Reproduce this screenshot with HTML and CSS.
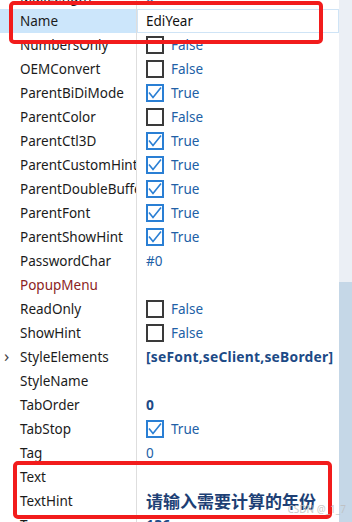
FILE: index.html
```html
<!DOCTYPE html>
<html lang="zh">
<head>
    <meta charset="UTF-8">
    <meta name="viewport" content="width=device-width, initial-scale=1.0">
    <title>Object Inspector</title>
    <link rel="stylesheet" href="styles.css">
</head>
<body>
    <div class="inspector">
        <div class="grid">
            <div class="row"><div class="name">MaxLength</div><div class="value">0</div></div>
            <div class="row selected"><div class="name">Name</div><div class="value"><div class="edit">EdiYear</div></div></div>
            <div class="row"><div class="name">NumbersOnly</div><div class="value"><span class="check"></span>False</div></div>
            <div class="row"><div class="name">OEMConvert</div><div class="value"><span class="check"></span>False</div></div>
            <div class="row"><div class="name">ParentBiDiMode</div><div class="value"><span class="check on"></span>True</div></div>
            <div class="row"><div class="name">ParentColor</div><div class="value"><span class="check"></span>False</div></div>
            <div class="row"><div class="name">ParentCtl3D</div><div class="value"><span class="check on"></span>True</div></div>
            <div class="row"><div class="name">ParentCustomHint</div><div class="value"><span class="check on"></span>True</div></div>
            <div class="row"><div class="name">ParentDoubleBuffered</div><div class="value"><span class="check on"></span>True</div></div>
            <div class="row"><div class="name">ParentFont</div><div class="value"><span class="check on"></span>True</div></div>
            <div class="row"><div class="name">ParentShowHint</div><div class="value"><span class="check on"></span>True</div></div>
            <div class="row"><div class="name">PasswordChar</div><div class="value">#0</div></div>
            <div class="row"><div class="name link">PopupMenu</div><div class="value"></div></div>
            <div class="row"><div class="name">ReadOnly</div><div class="value"><span class="check"></span>False</div></div>
            <div class="row"><div class="name">ShowHint</div><div class="value"><span class="check"></span>False</div></div>
            <div class="row"><div class="name"><span class="expand">&#x203A;</span>StyleElements</div><div class="value bold">[seFont,seClient,seBorder]</div></div>
            <div class="row"><div class="name">StyleName</div><div class="value"></div></div>
            <div class="row"><div class="name">TabOrder</div><div class="value bold">0</div></div>
            <div class="row"><div class="name">TabStop</div><div class="value"><span class="check on"></span>True</div></div>
            <div class="row"><div class="name">Tag</div><div class="value">0</div></div>
            <div class="row"><div class="name">Text</div><div class="value"></div></div>
            <div class="row"><div class="name">TextHint</div><div class="value bold cjk">请输入需要计算的年份</div></div>
            <div class="row"><div class="name">Top</div><div class="value bold">136</div></div>
        </div>
        <div class="scrollbar"><div class="thumb"></div></div>

        <div class="mark mark-top"></div>
        <div class="mark mark-bottom"></div>
        <div class="watermark">CSDN @_1_7</div>
    </div>
</body>
</html>
```

FILE: styles.css
```css
* {
    box-sizing: border-box;
}
body {
    margin: 0;
    background-color: #fff;
    font-family: "Noto Sans", "Open Sans", sans-serif;
    font-size: 13.5px;
    color: #1b1b1b;
}
.inspector {
    position: relative;
    width: 352px;
    height: 522px;
    overflow: hidden;
    display: flex;
}
.grid {
    flex: 1;
    margin-top: -15px;
}
.row {
    display: grid;
    grid-template-columns: 137px 1fr;
    height: 24px;
    line-height: 24px;
    white-space: nowrap;
}
.name {
    position: relative;
    padding-left: 20px;
    overflow: hidden;
    border-right: 1px solid #dedede;
}
.name.link {
    color: #8b2323;
}
.expand {
    position: absolute;
    left: 4px;
    top: -1px;
    font-size: 17px;
    color: #444;
}
.value {
    display: flex;
    align-items: center;
    padding-left: 9px;
    color: #2160a6;
    overflow: hidden;
}
.value.bold {
    font-weight: bold;
    font-size: 13.8px;
    letter-spacing: 0.25px;
    color: #1c4a86;
}
.value.cjk {
    font-family: "Noto Sans CJK SC", sans-serif;
    font-size: 17px;
    letter-spacing: 0;
    color: #1d3f75;
}
.selected .name {
    background-color: #cce6fb;
}
.selected .value {
    padding: 0;
}
.edit {
    width: 100%;
    height: 24px;
    padding-left: 8px;
    border: 1px solid #cfe4f6;
    color: #111;
    line-height: 22px;
}
.check {
    width: 18px;
    height: 18px;
    margin-right: 7px;
    border: 2px solid #3a3a3a;
    background-color: #fff;
    flex-shrink: 0;
}
.check.on {
    border-color: #2a7fd4;
    background: #fff url("data:image/svg+xml;utf8,<svg xmlns='http://www.w3.org/2000/svg' width='14' height='14' viewBox='0 0 14 14'><path d='M1 6.5 L5 11.5 L13 1.5' fill='none' stroke='%232a7fd4' stroke-width='1.6'/></svg>") no-repeat center;
}
.scrollbar {
    width: 13px;
    background-color: #ebeff5;
    display: flex;
    flex-direction: column;
}
.thumb {
    margin-top: 282px;
    flex: 1;
    background-color: #c5d7e7;
}
.mark {
    position: absolute;
    border: 4px solid #f21c1c;
    border-radius: 5px;
}
.mark-top {
    left: 9px;
    top: 1px;
    width: 314px;
    height: 43px;
}
.mark-bottom {
    left: 13px;
    top: 461px;
    width: 319px;
    height: 58px;
}
.watermark {
    position: absolute;
    right: 6px;
    bottom: 6px;
    font-size: 10px;
    color: rgba(190, 190, 190, 0.85);
}
```
